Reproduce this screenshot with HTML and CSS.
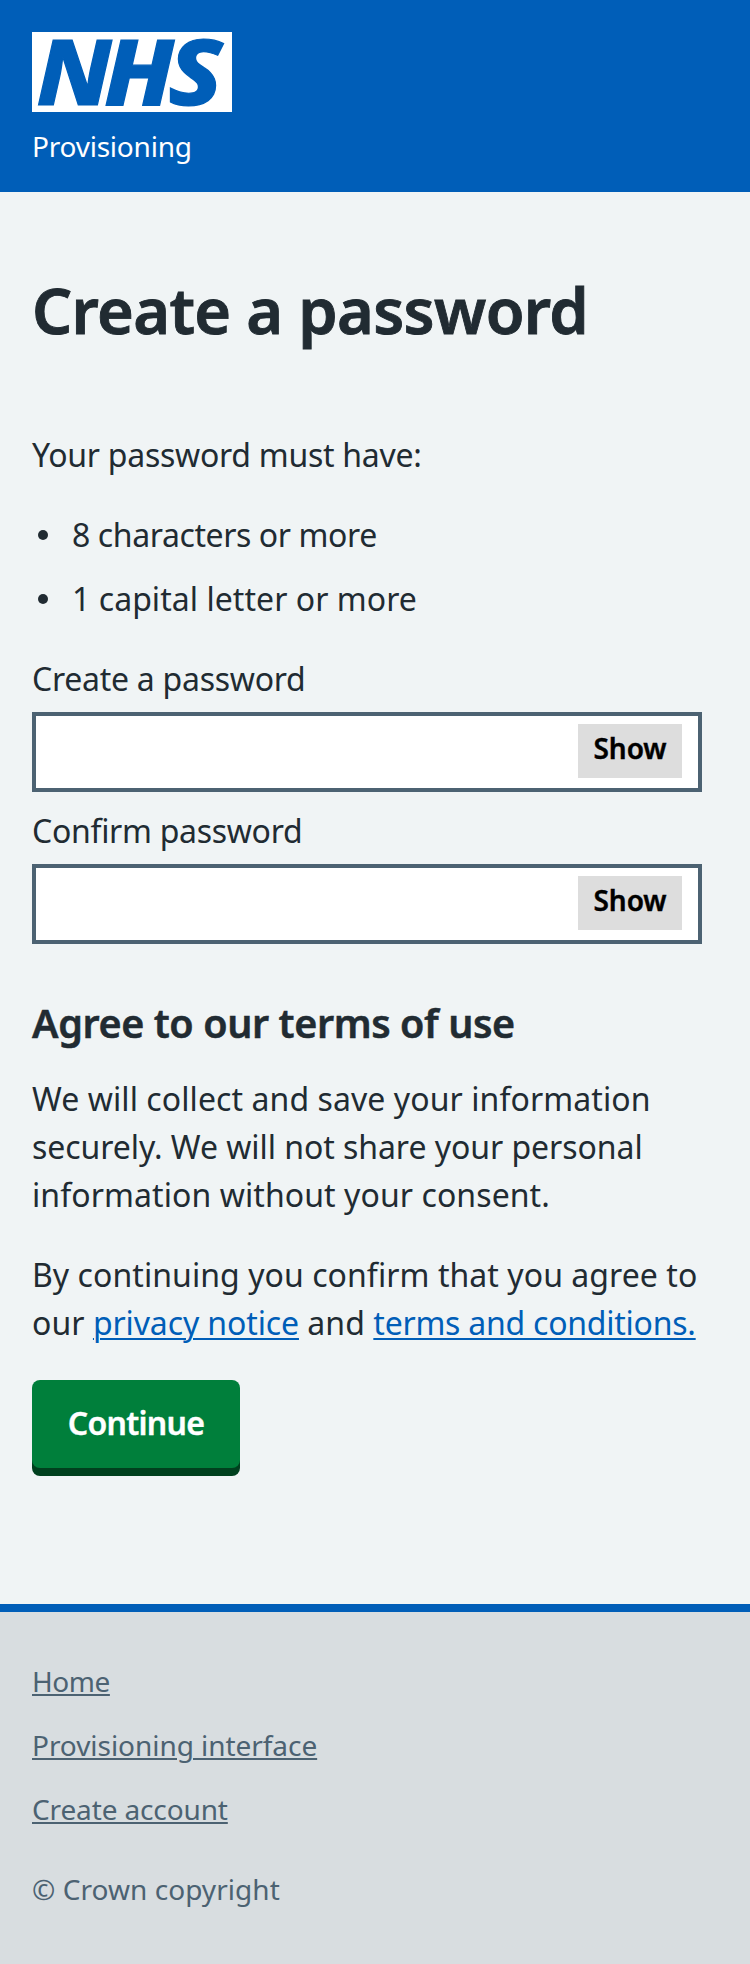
FILE: index.html
```html
<!DOCTYPE html>
<html lang="en">
<head>
<meta charset="utf-8">
<title>Create a password</title>
<link rel="stylesheet" href="styles.css">
</head>
<body>
<header class="header">
  <svg class="logo" viewBox="0 0 200 80" role="img" aria-label="NHS">
    <rect width="200" height="80" fill="#fff"/>
    <g class="logo-letters">
      <text x="4.5" y="72.5" textLength="75" lengthAdjust="spacingAndGlyphs">N</text>
      <text x="72" y="72.5" textLength="70" lengthAdjust="spacingAndGlyphs">H</text>
      <text x="136.5" y="72.5" textLength="54" lengthAdjust="spacingAndGlyphs">S</text>
    </g>
  </svg>
  <span class="service">Provisioning</span>
</header>
<main class="main">
  <h1 class="title">Create a password</h1>
  <p class="text intro">Your password must have:</p>
  <ul class="rules">
    <li class="rule rule-length">8 characters or more</li>
    <li class="rule rule-capital">1 capital letter or more</li>
  </ul>
  <form class="form">
    <label class="label" for="create">Create a password</label>
    <div class="field"><input class="input" id="create" type="password"><button class="show" type="button">Show</button></div>
    <label class="label label-confirm" for="confirm">Confirm password</label>
    <div class="field"><input class="input" id="confirm" type="password"><button class="show" type="button">Show</button></div>
    <h2 class="subtitle">Agree to our terms of use</h2>
    <p class="text collect">We will collect and save your information<br><span class="line-snug">securely. We will not share your personal</span><br>information without your consent.</p>
    <p class="text agree">By continuing you confirm that you agree to<br>our <a class="link privacy" href="#">privacy notice</a> and <a class="link terms" href="#">terms and conditions.</a></p>
    <button class="continue" type="button">Continue</button>
  </form>
</main>
<footer class="footer">
  <nav class="footer-nav">
    <a class="footer-link home" href="#">Home</a>
    <a class="footer-link interface" href="#">Provisioning interface</a>
    <a class="footer-link account" href="#">Create account</a>
  </nav>
  <p class="copyright">© Crown copyright</p>
</footer>
</body>
</html>
```
FILE: styles.css
```css
* { box-sizing: border-box; }
body {
  margin: 0;
  min-height: 1964px;
  display: flex;
  flex-direction: column;
  background: #f0f4f5;
  color: #212b32;
  font-family: "Noto Sans", "Open Sans", sans-serif;
  font-size: 32px;
  line-height: 48px;
  letter-spacing: -0.27px;
}
h1, h2, p, ul { margin: 0; padding: 0; }
button, input { font-family: inherit; letter-spacing: inherit; margin: 0; border: 0; }
.header {
  height: 192px;
  padding: 32px 32px 0;
  background: #005eb8;
  color: #fff;
  display: flex;
  flex-direction: column;
  align-items: flex-start;
}
.logo { display: block; width: 200px; height: 80px; overflow: visible; }
.logo-letters { font: italic 800 91px/1 "Noto Sans", sans-serif; letter-spacing: 0; fill: #005eb8; stroke: #005eb8; stroke-width: 1.2; }
.service { margin-top: 14px; font-size: 28px; line-height: 40px; letter-spacing: -0.22px; }
.main { height: 1412px; padding: 82px 48px 0 32px; }
.title { font-size: 63px; line-height: 72px; font-weight: 600; letter-spacing: -0.65px; -webkit-text-stroke: 0.9px; }
.intro { margin-top: 85px; }
.rules { list-style: none; margin-top: 32px; display: flex; flex-direction: column; gap: 16px; }
.rule { display: flex; align-items: center; }
.rule-length { letter-spacing: -0.4px; }
.rule-capital { letter-spacing: 0.05px; }
.rule::before { content: ""; width: 10px; height: 10px; border-radius: 50%; background: #212b32; margin: 0 24px 0 6px; }
.form { display: flex; flex-direction: column; align-items: stretch; margin-top: 32px; }
.label-confirm { margin-top: 15px; letter-spacing: -0.3px; }
.field {
  margin-top: 9px;
  height: 80px;
  border: 4px solid #4c6272;
  background: #fff;
  display: flex;
  align-items: flex-start;
  padding: 8px 16px 0 8px;
}
.input { flex: 1; min-width: 0; height: 54px; background: transparent; outline: 0; }
.show {
  width: 104px;
  height: 54px;
  padding: 4px 0 10px;
  background: #ddd;
  color: #000;
  font-size: 28px;
  line-height: 40px;
  font-weight: 600;
  letter-spacing: 0;
  -webkit-text-stroke: 0.4px;
}
.subtitle { margin-top: 53px; font-size: 39.5px; line-height: 52px; font-weight: 600; letter-spacing: -0.4px; -webkit-text-stroke: 0.5px; }
.collect { margin-top: 26px; letter-spacing: 0.08px; }
.line-snug { letter-spacing: -0.05px; }
.agree { margin-top: 32px; white-space: nowrap; letter-spacing: 0.06px; }
.privacy { letter-spacing: -0.12px; }
.terms { letter-spacing: -0.24px; }
.link { color: #005eb8; text-decoration-thickness: 2px; text-underline-offset: 3px; }
.continue {
  align-self: flex-start;
  width: 208px;
  height: 88px;
  margin-top: 33px;
  padding: 19px 0 21px;
  border-radius: 8px;
  background: #007f3b;
  box-shadow: 0 8px 0 #00401e;
  color: #fff;
  font-size: 32px;
  line-height: 48px;
  font-weight: 600;
  letter-spacing: -0.7px;
  -webkit-text-stroke: 0.4px;
}
.footer {
  flex: 1;
  border-top: 8px solid #005eb8;
  background: #d8dde0;
  color: #4c6272;
  padding: 49px 32px 0;
  font-size: 28px;
  line-height: 40px;
}
.footer-nav { display: flex; flex-direction: column; align-items: flex-start; gap: 24px; }
.footer-link { color: #4c6272; text-decoration-thickness: 2px; text-underline-offset: 2px; }
.home { letter-spacing: -0.45px; }
.interface { letter-spacing: -0.05px; }
.account { letter-spacing: -0.13px; }
.copyright { margin-top: 40px; letter-spacing: 0.05px; }
```
